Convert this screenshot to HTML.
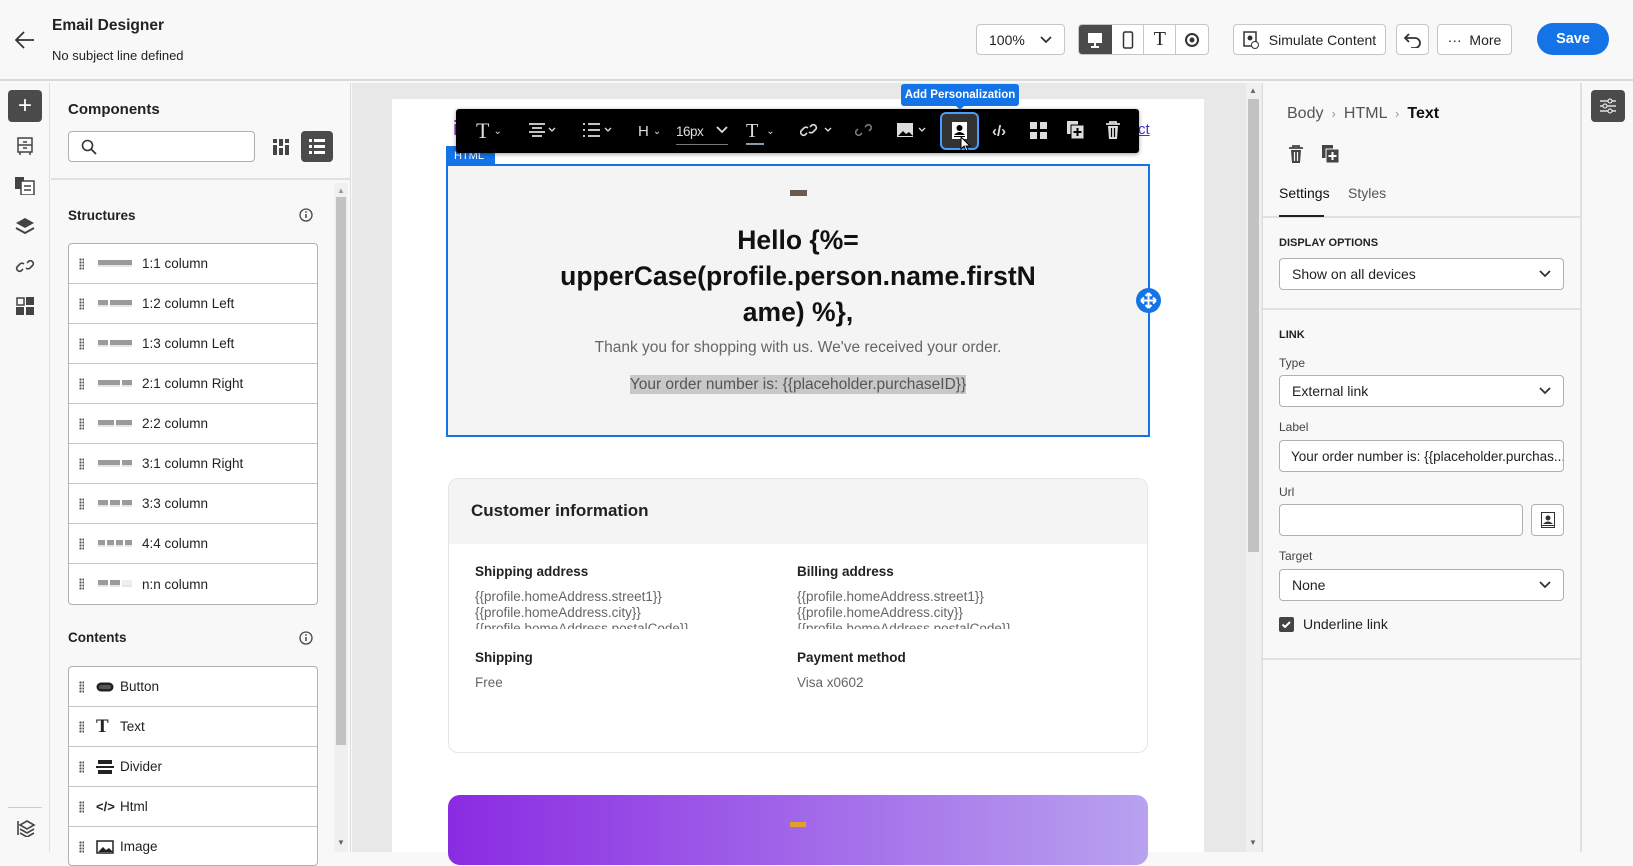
<!DOCTYPE html>
<html><head><meta charset="utf-8"><style>
*{box-sizing:border-box;margin:0;padding:0}
body{width:1633px;height:852px;overflow:hidden;background:#f8f8f8;font-family:"Liberation Sans",sans-serif;color:#222;position:relative}
.a{position:absolute}
.btn{position:absolute;border:1px solid #c6c6c6;border-radius:4px;background:#fff;display:flex;align-items:center;justify-content:center;font-size:14px;color:#222}
.row{position:absolute;left:0;width:248px;height:40px;border-bottom:1px solid #c6c6c6;display:flex;align-items:center;font-size:13.5px}
.grip{width:5px;height:12px;margin:0 14px 0 10px;background:radial-gradient(circle,#555 1px,transparent 1.3px) 0 0/3px 3px}
.thumb{width:34px;height:10px;margin-right:10px;display:flex;gap:2px}
.thumb i{background:#9a9a9a;height:7px;margin-top:1px;display:block;border-bottom:2px solid #e6e6e6}
.sel{position:absolute;left:1279px;width:285px;height:32px;border:1px solid #b0b0b0;border-radius:4px;background:#fff;font-size:14px;display:flex;align-items:center;padding-left:12px}
.sel svg{position:absolute;right:12px;top:11px}
.lbl{position:absolute;left:1279px;font-size:12px;color:#444}
.ti{position:absolute;top:109px;height:44px;display:flex;align-items:center}
</style></head><body>

<!-- header -->
<div class="a" style="left:0;top:0;width:1633px;height:81px;background:#f8f8f8;border-bottom:2px solid #dadada"></div>
<svg class="a" style="left:15px;top:31px" width="20" height="18" viewBox="0 0 20 18"><path d="M19 9H2M9 1L1 9l8 8" fill="none" stroke="#333" stroke-width="1.8"/></svg>
<div class="a" style="left:52px;top:17px;font-size:15.5px;font-weight:bold">Email Designer</div>
<div class="a" style="left:52px;top:48px;font-size:13px">No subject line defined</div>

<div class="btn" style="left:976px;top:24px;width:89px;height:31px;justify-content:flex-start;padding-left:12px">100%<svg class="a" style="right:12px;top:11px" width="12" height="8"><path d="M1 1l5 5 5-5" fill="none" stroke="#333" stroke-width="1.8"/></svg></div>
<div class="a" style="left:1078px;top:24px;width:131px;height:31px;border:1px solid #c6c6c6;border-radius:4px;background:#fff;display:flex;overflow:hidden">
 <div style="width:33px;background:#4b4b4b;display:flex;align-items:center;justify-content:center"><svg width="16" height="16"><rect x="1" y="1" width="14" height="10" fill="#fff"/><path d="M8 11v3M4 15h8" stroke="#fff" stroke-width="2"/></svg></div>
 <div style="width:33px;border-right:1px solid #c6c6c6;display:flex;align-items:center;justify-content:center"><svg width="12" height="18"><rect x="1.5" y="1" width="9" height="16" rx="1.5" fill="none" stroke="#333" stroke-width="1.5"/></svg></div>
 <div style="width:32px;border-right:1px solid #c6c6c6;display:flex;align-items:center;justify-content:center;font-family:'Liberation Serif';font-size:20px">T</div>
 <div style="width:32px;display:flex;align-items:center;justify-content:center"><svg width="16" height="16"><circle cx="8" cy="8" r="6" fill="none" stroke="#333" stroke-width="2"/><circle cx="8" cy="8" r="2.5" fill="#333"/></svg></div>
</div>
<div class="btn" style="left:1233px;top:24px;width:153px;height:31px"><svg width="16" height="18" style="margin-right:10px"><rect x="1" y="1" width="12" height="14" fill="none" stroke="#333" stroke-width="1.5"/><circle cx="7" cy="7" r="2.5" fill="#333"/><circle cx="12" cy="14" r="3.5" fill="#fff" stroke="#333"/></svg>Simulate Content</div>
<div class="btn" style="left:1396px;top:24px;width:33px;height:31px"><svg width="18" height="16"><path d="M5 2L1 6l4 4M1 6h10a5 5 0 010 10H7" fill="none" stroke="#333" stroke-width="1.8"/></svg></div>
<div class="btn" style="left:1437px;top:24px;width:75px;height:31px">··· &nbsp;More</div>
<div class="a" style="left:1537px;top:23px;width:72px;height:32px;border-radius:16px;background:#1473e6;color:#fff;font-weight:bold;font-size:14.5px;display:flex;align-items:center;justify-content:center">Save</div>

<!-- left rail -->
<div class="a" style="left:0;top:83px;width:50px;height:769px;background:#f8f8f8;border-right:1px solid #e0e0e0"></div>
<div class="a" style="left:8px;top:90px;width:34px;height:32px;border-radius:4px;background:#4b4b4b;color:#fff;font-size:24px;display:flex;align-items:center;justify-content:center">+</div>
<svg class="a" style="left:16px;top:137px" width="18" height="18"><rect x="2" y="1" width="14" height="14" fill="none" stroke="#444" stroke-width="1.5"/><path d="M2 8h14M7 5h4M7 11h4M4 15v3M14 15v3" stroke="#444" stroke-width="1.5"/></svg>
<svg class="a" style="left:15px;top:177px" width="20" height="18"><rect x="0" y="0" width="9" height="12" fill="#444"/><rect x="6" y="4" width="13" height="14" fill="#fff" stroke="#444" stroke-width="1.5"/><path d="M9 9h7M9 13h7" stroke="#444" stroke-width="1.5"/></svg>
<svg class="a" style="left:15px;top:217px" width="20" height="18"><path d="M10 1l9 5-9 5-9-5z" fill="#444"/><path d="M1 11l9 5 9-5" fill="none" stroke="#444" stroke-width="2"/></svg>
<svg class="a" style="left:15px;top:257px" width="20" height="18"><path d="M8 12l-2 2a3 3 0 01-4-4l3-3a3 3 0 014 0M12 6l2-2a3 3 0 014 4l-3 3a3 3 0 01-4 0" fill="none" stroke="#444" stroke-width="1.6"/></svg>
<svg class="a" style="left:16px;top:297px" width="18" height="18"><rect x="1" y="1" width="7" height="7" fill="none" stroke="#444" stroke-width="1.5"/><rect x="10" y="0" width="8" height="8" fill="#444"/><rect x="0" y="10" width="8" height="8" fill="#444"/><rect x="10" y="10" width="8" height="8" fill="#444"/></svg>
<div class="a" style="left:8px;top:807px;width:34px;height:1px;background:#ccc"></div>
<svg class="a" style="left:16px;top:819px" width="20" height="18"><path d="M2 2v14M11 2l7 4-7 4-7-4z" fill="none" stroke="#444" stroke-width="1.6"/><path d="M4 10l7 4 7-4M4 14l7 4 7-4" fill="none" stroke="#444" stroke-width="1.6"/></svg>

<!-- components panel -->
<div class="a" style="left:51px;top:83px;width:300px;height:769px;background:#f8f8f8;border-right:1px solid #ddd"></div>
<div class="a" style="left:68px;top:101px;font-size:15px;font-weight:bold">Components</div>
<div class="a" style="left:68px;top:131px;width:187px;height:31px;border:1px solid #b0b0b0;border-radius:4px;background:#fff"><svg style="position:absolute;left:12px;top:7px" width="16" height="16"><circle cx="6.5" cy="6.5" r="5" fill="none" stroke="#333" stroke-width="1.6"/><path d="M10 10l5 5" stroke="#333" stroke-width="1.8"/></svg></div>
<svg class="a" style="left:273px;top:139px" width="16" height="16"><g fill="#444"><rect x="0" y="0" width="4" height="4"/><rect x="6" y="0" width="4" height="7"/><rect x="12" y="0" width="4" height="4"/><rect x="0" y="6" width="4" height="10"/><rect x="6" y="9" width="4" height="7"/><rect x="12" y="6" width="4" height="10"/></g></svg>
<div class="a" style="left:301px;top:131px;width:32px;height:31px;border-radius:4px;background:#4b4b4b"><svg style="position:absolute;left:8px;top:8px" width="16" height="15"><g fill="#fff"><rect x="0" y="0" width="3" height="3"/><rect x="5" y="0" width="11" height="3"/><rect x="0" y="6" width="3" height="3"/><rect x="5" y="6" width="11" height="3"/><rect x="0" y="12" width="3" height="3"/><rect x="5" y="12" width="11" height="3"/></g></svg></div>
<div class="a" style="left:51px;top:178px;width:299px;height:2px;background:#e0e0e0"></div>
<div class="a" style="left:334px;top:183px;width:14px;height:669px;background:#f0f0f0"></div>
<div class="a" style="left:336px;top:197px;width:10px;height:548px;background:#c2c2c2"></div>
<div class="a" style="left:337px;top:186px;font-size:8px;color:#999">▲</div>
<div class="a" style="left:337px;top:838px;font-size:8px;color:#666">▼</div>

<div class="a" style="left:68px;top:208px;font-size:13.5px;font-weight:bold">Structures</div>
<svg class="a" style="left:299px;top:208px" width="14" height="14"><circle cx="7" cy="7" r="6" fill="none" stroke="#444" stroke-width="1.3"/><path d="M7 6v4" stroke="#444" stroke-width="1.5"/><circle cx="7" cy="4" r="0.9" fill="#444"/></svg>
<div class="a" style="left:68px;top:243px;width:250px;height:362px;border:1px solid #b0b0b0;border-radius:4px;background:#fff;overflow:hidden">
 <div class="row" style="top:0"><span class="grip"></span><span class="thumb"><i style="width:34px"></i></span>1:1 column</div>
 <div class="row" style="top:40px"><span class="grip"></span><span class="thumb"><i style="width:10px"></i><i style="width:22px"></i></span>1:2 column Left</div>
 <div class="row" style="top:80px"><span class="grip"></span><span class="thumb"><i style="width:10px"></i><i style="width:22px"></i></span>1:3 column Left</div>
 <div class="row" style="top:120px"><span class="grip"></span><span class="thumb"><i style="width:22px"></i><i style="width:10px"></i></span>2:1 column Right</div>
 <div class="row" style="top:160px"><span class="grip"></span><span class="thumb"><i style="width:16px"></i><i style="width:16px"></i></span>2:2 column</div>
 <div class="row" style="top:200px"><span class="grip"></span><span class="thumb"><i style="width:22px"></i><i style="width:10px"></i></span>3:1 column Right</div>
 <div class="row" style="top:240px"><span class="grip"></span><span class="thumb"><i style="width:10px"></i><i style="width:10px"></i><i style="width:10px"></i></span>3:3 column</div>
 <div class="row" style="top:280px"><span class="grip"></span><span class="thumb"><i style="width:7px"></i><i style="width:7px"></i><i style="width:7px"></i><i style="width:7px"></i></span>4:4 column</div>
 <div class="row" style="top:320px;border:none"><span class="grip"></span><span class="thumb"><i style="width:10px"></i><i style="width:10px"></i><i style="width:10px;background:#eee"></i></span>n:n column</div>
</div>
<div class="a" style="left:68px;top:630px;font-size:13.5px;font-weight:bold">Contents</div>
<svg class="a" style="left:299px;top:631px" width="14" height="14"><circle cx="7" cy="7" r="6" fill="none" stroke="#444" stroke-width="1.3"/><path d="M7 6v4" stroke="#444" stroke-width="1.5"/><circle cx="7" cy="4" r="0.9" fill="#444"/></svg>
<div class="a" style="left:68px;top:666px;width:250px;height:200px;border:1px solid #b0b0b0;border-radius:4px;background:#fff;overflow:hidden">
 <div class="row" style="top:0"><span class="grip" style="margin-right:12px"></span><svg width="18" height="10" style="margin-right:6px"><rect x="1" y="1" width="16" height="8" rx="4" fill="#222" stroke="#222"/><rect x="3" y="3" width="12" height="4" rx="2" fill="#555"/></svg>Button</div>
 <div class="row" style="top:40px"><span class="grip" style="margin-right:12px"></span><span style="font-family:'Liberation Serif';font-size:19px;font-weight:bold;width:24px">T</span>Text</div>
 <div class="row" style="top:80px"><span class="grip" style="margin-right:12px"></span><svg width="18" height="14" style="margin-right:6px"><rect x="2" y="0" width="14" height="4" fill="#222"/><rect x="0" y="6" width="18" height="2" fill="#222"/><rect x="2" y="10" width="14" height="4" fill="#222"/></svg>Divider</div>
 <div class="row" style="top:120px"><span class="grip" style="margin-right:12px"></span><span style="font-size:13px;font-weight:bold;width:24px">&lt;/&gt;</span>Html</div>
 <div class="row" style="top:160px"><span class="grip" style="margin-right:12px"></span><svg width="18" height="14" style="margin-right:6px"><rect x="1" y="1" width="16" height="12" fill="none" stroke="#222" stroke-width="1.5"/><path d="M2 12l5-5 3 3 3-2 4 4z" fill="#222"/></svg>Image</div>
</div>

<!-- canvas -->
<div class="a" style="left:352px;top:83px;width:910px;height:769px;background:#e8e8e8"></div>
<div class="a" style="left:1246px;top:83px;width:15px;height:769px;background:#f0f0f0"></div>
<div class="a" style="left:1248px;top:99px;width:11px;height:453px;background:#c2c2c2"></div>
<div class="a" style="left:1249px;top:86px;font-size:8px;color:#666">▲</div>
<div class="a" style="left:1249px;top:838px;font-size:8px;color:#666">▼</div>
<div class="a" style="left:392px;top:99px;width:812px;height:753px;background:#fff"></div>
<div class="a" style="left:453px;top:118px;font-size:20px;font-weight:bold;color:#8a2be2">i</div>
<div class="a" style="left:1138px;top:121px;font-size:15px;color:#3737d0;text-decoration:underline">ct</div>

<!-- selected block -->
<div class="a" style="left:446px;top:164px;width:704px;height:273px;border:2px solid #1473e6;background:#f4f4f4"></div>
<div class="a" style="left:446px;top:146px;width:49px;height:19px;background:#1473e6;color:#fff;font-size:11px;padding:4px 0 0 8px">HTML</div>
<div class="a" style="left:790px;top:190px;width:17px;height:6px;background:#6a5a50"></div>
<div class="a" style="left:446px;top:222px;width:704px;text-align:center;font-size:26.5px;font-weight:bold;line-height:36px;color:#111">Hello {%=<br>upperCase(profile.person.name.firstN<br>ame) %},</div>
<div class="a" style="left:446px;top:339px;width:704px;text-align:center;font-size:15.5px;color:#666">Thank you for shopping with us. We've received your order.</div>
<div class="a" style="left:446px;top:376px;width:704px;text-align:center;font-size:15.5px;color:#555"><span style="background:#c8c8c8;padding:1px 0">Your order number is: {{placeholder.purchaseID}}</span></div>
<div class="a" style="left:1136px;top:288px;width:25px;height:25px;border-radius:50%;background:#1473e6"><svg width="25" height="25"><path d="M12.5 5v15M5 12.5h15M12.5 5l-3 3M12.5 5l3 3M12.5 20l-3-3M12.5 20l3-3M5 12.5l3-3M5 12.5l3 3M20 12.5l-3-3M20 12.5l-3 3" stroke="#fff" stroke-width="2" fill="none"/></svg></div>

<!-- toolbar -->
<div class="a" style="left:456px;top:109px;width:683px;height:44px;background:#000;border-radius:3px;box-shadow:0 1px 4px rgba(0,0,0,.4)"></div>
<div class="a" style="left:901px;top:84px;width:118px;height:22px;background:#1473e6;border-radius:3px;color:#fff;font-size:11.5px;font-weight:bold;text-align:center;line-height:22px">Add Personalization</div>
<div class="a" style="left:955px;top:105px;width:0;height:0;border-left:5px solid transparent;border-right:5px solid transparent;border-top:5px solid #1473e6"></div>
<div style="color:#ddd">
<div class="ti" style="left:476px;font-family:'Liberation Serif';font-size:22px;color:#ddd">T<span style="font-size:10px;margin-left:4px">⌄</span></div>
<svg class="a" style="left:528px;top:123px" width="28" height="14"><path d="M1 1h16M4 5h10M1 9h16M4 13h10" stroke="#ddd" stroke-width="1.8"/><path d="M21 5l3 3 3-3" fill="none" stroke="#ddd" stroke-width="1.3"/></svg>
<svg class="a" style="left:582px;top:123px" width="30" height="14"><path d="M1 1h2M6 1h12M1 7h2M6 7h12M1 13h2M6 13h12" stroke="#ddd" stroke-width="1.8"/><path d="M23 5l3 3 3-3" fill="none" stroke="#ddd" stroke-width="1.3"/></svg>
<div class="ti" style="left:638px;font-size:15px;color:#ddd">H<span style="font-size:10px;margin-left:4px">⌄</span></div>
<div class="ti" style="left:676px;font-size:13.5px;color:#ddd;letter-spacing:-.5px">16px</div>
<div class="a" style="left:676px;top:144px;width:52px;height:1px;background:#777"></div>
<svg class="a" style="left:716px;top:126px" width="12" height="8"><path d="M1 1l5 5 5-5" fill="none" stroke="#ddd" stroke-width="1.8"/></svg>
<div class="ti" style="left:746px;font-family:'Liberation Serif';font-size:20px;color:#ddd">T<span style="font-size:10px;margin-left:8px">⌄</span></div>
<div class="a" style="left:746px;top:143px;width:18px;height:2px;background:#8899aa"></div>
<svg class="a" style="left:800px;top:122px" width="36" height="16"><path d="M7 11l-2 2a3 3 0 01-4-4l3-3a3 3 0 014 0M10 5l2-2a3 3 0 014 4l-3 3a3 3 0 01-4 0" fill="none" stroke="#ddd" stroke-width="1.6"/><path d="M25 6l3 3 3-3" fill="none" stroke="#ddd" stroke-width="1.3"/></svg>
<svg class="a" style="left:855px;top:122px" width="18" height="16"><path d="M7 11l-2 2a3 3 0 01-4-4l2-2M10 5l2-2a3 3 0 014 4l-2 2" fill="none" stroke="#777" stroke-width="1.6"/></svg>
<svg class="a" style="left:897px;top:123px" width="30" height="14"><rect x="0" y="0" width="16" height="14" fill="#ddd"/><path d="M1 13l5-5 3 3 3-2 4 4z" fill="#000"/><path d="M22 5l3 3 3-3" fill="none" stroke="#ddd" stroke-width="1.3"/></svg>
<div class="a" style="left:940px;top:112px;width:39px;height:38px;border:2px solid #4a9bff;border-radius:6px;background:#333"></div>
<svg class="a" style="left:951px;top:121px" width="17" height="19"><rect x="1" y="1" width="15" height="17" fill="#fff"/><circle cx="8.5" cy="7" r="3" fill="#000"/><path d="M3 14q5.5-6 11 0z" fill="#000"/><path d="M3 15.5h11" stroke="#000"/></svg>
<svg class="a" style="left:960px;top:136px" width="12" height="16"><path d="M1 1v12l3-3 2 5 2-1-2-4h4z" fill="#fff" stroke="#000"/></svg>
<div class="ti" style="left:992px;font-size:15px;color:#ddd;font-weight:bold">‹/›</div>
<svg class="a" style="left:1030px;top:122px" width="17" height="17"><rect x="0" y="0" width="7" height="7" fill="#ddd"/><rect x="10" y="0" width="7" height="7" fill="#ddd"/><rect x="0" y="10" width="7" height="7" fill="#ddd"/><rect x="10" y="10" width="7" height="7" fill="#ddd"/></svg>
<svg class="a" style="left:1067px;top:121px" width="18" height="19"><rect x="0" y="0" width="11" height="13" fill="#ddd"/><rect x="4" y="4" width="13" height="14" fill="#ddd" stroke="#000"/><path d="M10.5 7v8M6.5 11h8" stroke="#000" stroke-width="2"/></svg>
<svg class="a" style="left:1105px;top:121px" width="16" height="19"><path d="M1 3h14M5 3V1h6v2" stroke="#ddd" stroke-width="1.8" fill="none"/><path d="M3 5h10l-1 13H4z" fill="#ddd"/><path d="M6.5 7v9M9.5 7v9" stroke="#000" stroke-width="1.2"/></svg>
</div>

<!-- customer info -->
<div class="a" style="left:448px;top:478px;width:700px;height:275px;border:1px solid #e6e6e6;border-radius:10px;background:#fff;overflow:hidden">
 <div style="height:65px;background:#f4f4f4;padding:22px 0 0 22px;font-size:17px;font-weight:bold">Customer information</div>
 <div class="a" style="left:26px;top:85px;font-size:13.5px;font-weight:bold">Shipping address</div>
 <div class="a" style="left:348px;top:85px;font-size:13.5px;font-weight:bold">Billing address</div>
 <div class="a" style="left:26px;top:110px;height:40px;overflow:hidden;font-size:13.5px;color:#666;line-height:16px">{{profile.homeAddress.street1}}<br>{{profile.homeAddress.city}}<br>{{profile.homeAddress.postalCode}}</div>
 <div class="a" style="left:348px;top:110px;height:40px;overflow:hidden;font-size:13.5px;color:#666;line-height:16px">{{profile.homeAddress.street1}}<br>{{profile.homeAddress.city}}<br>{{profile.homeAddress.postalCode}}</div>
 <div class="a" style="left:26px;top:171px;font-size:13.5px;font-weight:bold">Shipping</div>
 <div class="a" style="left:348px;top:171px;font-size:13.5px;font-weight:bold">Payment method</div>
 <div class="a" style="left:26px;top:196px;font-size:13.5px;color:#666">Free</div>
 <div class="a" style="left:348px;top:196px;font-size:13.5px;color:#666">Visa x0602</div>
</div>
<div class="a" style="left:448px;top:795px;width:700px;height:70px;border-radius:12px;background:linear-gradient(90deg,#8a2be2,#b8a2ef)"></div>
<div class="a" style="left:790px;top:822px;width:16px;height:5px;background:#e0a030"></div>

<!-- right panel -->
<div class="a" style="left:1262px;top:83px;width:320px;height:769px;background:#f8f8f8;border-left:1px solid #ddd;border-right:2px solid #e0e0e0"></div>
<div class="a" style="left:1287px;top:105px;font-size:16px;color:#555">Body <span style="color:#999;font-size:13px">&nbsp;›&nbsp;</span> HTML <span style="color:#999;font-size:13px">&nbsp;›&nbsp;</span> <b style="color:#111">Text</b></div>
<svg class="a" style="left:1288px;top:145px" width="16" height="18"><path d="M1 3h14M5 3V1h6v2" stroke="#444" stroke-width="1.8" fill="none"/><path d="M3 5h10l-1 13H4z" fill="#444"/><path d="M6.5 7v9M9.5 7v9" stroke="#f8f8f8" stroke-width="1.2"/></svg>
<svg class="a" style="left:1322px;top:145px" width="18" height="19"><rect x="0" y="0" width="11" height="13" fill="#444"/><rect x="4" y="4" width="13" height="14" fill="#444" stroke="#f8f8f8"/><path d="M10.5 7v8M6.5 11h8" stroke="#fff" stroke-width="2"/></svg>
<div class="a" style="left:1279px;top:185px;font-size:14px;color:#111">Settings</div>
<div class="a" style="left:1348px;top:185px;font-size:14px;color:#555">Styles</div>
<div class="a" style="left:1263px;top:216px;width:317px;height:2px;background:#e0e0e0"></div>
<div class="a" style="left:1279px;top:215px;width:45px;height:2px;background:#222"></div>
<div class="a" style="left:1279px;top:237px;font-size:11px;font-weight:bold">DISPLAY OPTIONS</div>
<div class="sel" style="top:258px">Show on all devices<svg width="12" height="8"><path d="M1 1l5 5 5-5" fill="none" stroke="#333" stroke-width="1.8"/></svg></div>
<div class="a" style="left:1263px;top:308px;width:317px;height:2px;background:#e0e0e0"></div>
<div class="a" style="left:1279px;top:329px;font-size:11px;font-weight:bold">LINK</div>
<div class="lbl" style="top:356px">Type</div>
<div class="sel" style="top:375px">External link<svg width="12" height="8"><path d="M1 1l5 5 5-5" fill="none" stroke="#333" stroke-width="1.8"/></svg></div>
<div class="lbl" style="top:420px">Label</div>
<div class="sel" style="top:440px;padding-left:11px;font-size:13.5px;white-space:nowrap;overflow:hidden">Your order number is: {{placeholder.purchas...</div>
<div class="lbl" style="top:485px">Url</div>
<div class="sel" style="top:504px;width:244px"></div>
<div class="a" style="left:1531px;top:504px;width:33px;height:32px;border:1px solid #b0b0b0;border-radius:4px;background:#fff"><svg style="position:absolute;left:9px;top:7px" width="14" height="16"><rect x="0.5" y="0.5" width="13" height="15" fill="#fff" stroke="#333"/><circle cx="7" cy="6" r="2.5" fill="#333"/><path d="M2 12q5-5 10 0z" fill="#333"/><path d="M1 13.5h12" stroke="#333"/></svg></div>
<div class="lbl" style="top:549px">Target</div>
<div class="sel" style="top:569px">None<svg width="12" height="8"><path d="M1 1l5 5 5-5" fill="none" stroke="#333" stroke-width="1.8"/></svg></div>
<div class="a" style="left:1279px;top:617px;width:15px;height:15px;border-radius:2px;background:#444"><svg width="15" height="15"><path d="M3.5 7.5l2.5 2.5 5-5" fill="none" stroke="#fff" stroke-width="2"/></svg></div>
<div class="a" style="left:1303px;top:616px;font-size:14px">Underline link</div>
<div class="a" style="left:1263px;top:658px;width:317px;height:2px;background:#e0e0e0"></div>

<!-- far right rail -->
<div class="a" style="left:1591px;top:90px;width:34px;height:32px;border-radius:4px;background:#4b4b4b"><svg style="position:absolute;left:9px;top:8px" width="16" height="16"><path d="M0 3h16M0 8h16M0 13h16" stroke="#fff" stroke-width="1.3"/><circle cx="10" cy="3" r="2" fill="#4b4b4b" stroke="#fff"/><circle cx="5" cy="8" r="2" fill="#4b4b4b" stroke="#fff"/><circle cx="10" cy="13" r="2" fill="#4b4b4b" stroke="#fff"/></svg></div>
</body></html>
